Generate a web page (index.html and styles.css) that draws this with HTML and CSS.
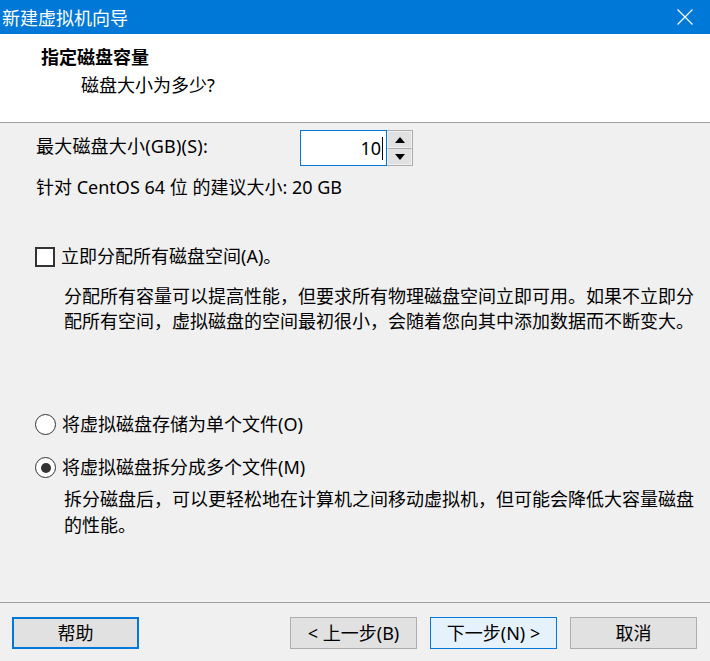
FILE: index.html
```html
<!DOCTYPE html>
<html lang="zh-CN">
<head>
<meta charset="utf-8">
<title>新建虚拟机向导</title>
<link rel="stylesheet" href="styles.css">
</head>
<body>
<div class="window">
  <div class="titlebar">
    <span class="title">新建虚拟机向导</span>
    <svg class="close" width="16" height="16" viewBox="0 0 16 16"><path d="M0.5 0.5 L15.5 15.5 M15.5 0.5 L0.5 15.5" stroke="#fff" stroke-width="1.2" fill="none"/></svg>
  </div>
  <div class="header">
    <div class="h-title">指定磁盘容量</div>
    <div class="h-sub">磁盘大小为多少?</div>
  </div>
  <div class="content">
    <div class="size-row">
      <span class="size-label">最大磁盘大小(GB)(S):</span>
      <div class="spinner">
        <div class="spin-input"><span class="spin-value">10</span><span class="caret"></span></div>
        <div class="spin-btns">
          <div class="spin-btn"><svg width="10" height="6" viewBox="0 0 10 6"><path d="M0 6 L5 0 L10 6 Z" fill="#000"/></svg></div>
          <div class="spin-btn"><svg width="10" height="6" viewBox="0 0 10 6"><path d="M0 0 L5 6 L10 0 Z" fill="#000"/></svg></div>
        </div>
      </div>
    </div>
    <div class="recommend">针对 CentOS 64 位 的建议大小: 20 GB</div>
    <div class="check-row">
      <span class="checkbox"></span>
      <span class="opt-label">立即分配所有磁盘空间(A)。</span>
    </div>
    <div class="desc desc-alloc">分配所有容量可以提高性能，但要求所有物理磁盘空间立即可用。如果不立即分配所有空间，虚拟磁盘的空间最初很小，会随着您向其中添加数据而不断变大。</div>
    <div class="radio-row radio-first">
      <span class="radio"></span>
      <span class="opt-label">将虚拟磁盘存储为单个文件(O)</span>
    </div>
    <div class="radio-row radio-second">
      <span class="radio checked"><span class="dot"></span></span>
      <span class="opt-label">将虚拟磁盘拆分成多个文件(M)</span>
    </div>
    <div class="desc desc-split">拆分磁盘后，可以更轻松地在计算机之间移动虚拟机，但可能会降低大容量磁盘的性能。</div>
  </div>
  <div class="footer">
    <button class="btn btn-help">帮助</button>
    <div class="spacer"></div>
    <button class="btn">&lt; 上一步(B)</button>
    <button class="btn btn-next">下一步(N) &gt;</button>
    <button class="btn">取消</button>
  </div>
</div>
</body>
</html>
```

FILE: styles.css
```css
html, body {
  margin: 0;
  padding: 0;
  width: 710px;
  height: 661px;
  overflow: hidden;
}
body {
  font-family: "Noto Sans", "Noto Sans CJK SC", sans-serif;
  font-size: 18px;
  color: #000;
  background: #f0f0f0;
}
.window {
  display: flex;
  flex-direction: column;
  width: 710px;
  height: 661px;
}
.titlebar {
  height: 34px;
  background: #0078d7;
  color: #fff;
  display: flex;
  align-items: center;
  justify-content: space-between;
  padding: 0 17px 0 2px;
  box-sizing: border-box;
  flex: none;
}
.title {
  font-size: 18px;
  line-height: 34px;
  font-family: "Noto Sans CJK SC", sans-serif;
}
.close {
  display: block;
}
.header {
  background: #fff;
  height: 88px;
  border-bottom: 1px solid #a0a0a0;
  flex: none;
  display: flex;
  flex-direction: column;
}
.h-title {
  margin: 11px 0 0 41px;
  font-size: 18px;
  line-height: 24px;
  font-weight: bold;
}
.h-sub {
  margin: 4px 0 0 81px;
  font-size: 18px;
  line-height: 24px;
}
.content {
  flex: 1;
  display: flex;
  flex-direction: column;
  padding-left: 36px;
}
.size-row {
  display: flex;
  align-items: center;
  margin-top: 7px;
  height: 36px;
}
.size-label {
  width: 264px;
  line-height: 25px;
  margin-top: -3px;
  letter-spacing: 0.2px;
}
.spinner {
  display: flex;
  height: 36px;
}
.spin-input {
  width: 87px;
  height: 36px;
  box-sizing: border-box;
  border: 1px solid #0078d7;
  background: #fff;
  display: flex;
  align-items: center;
  justify-content: flex-end;
  padding-right: 3px;
}
.spin-value {
  line-height: 24px;
}
.caret {
  width: 1px;
  height: 23px;
  background: #000;
  margin-left: 1px;
}
.spin-btns {
  display: flex;
  flex-direction: column;
  width: 26px;
  height: 36px;
  box-sizing: border-box;
  border: 1px solid #adadad;
  border-left: none;
}
.spin-btn {
  flex: 1;
  background: #e1e1e1;
  border: 1px solid #f0f0f0;
  display: flex;
  align-items: center;
  justify-content: center;
}
.spin-btn + .spin-btn {
  border-top: 1px solid #adadad;
}
.recommend {
  margin-top: 9px;
  line-height: 25px;
}
.check-row, .radio-row {
  display: flex;
  align-items: center;
  height: 25px;
}
.check-row {
  margin-top: 44px;
}
.checkbox {
  width: 20px;
  height: 20px;
  box-sizing: border-box;
  border: 2px solid #333;
  background: #fff;
  margin-left: -1px;
}
.opt-label {
  margin-left: 6px;
  line-height: 25px;
}
.desc {
  margin-left: 28px;
  width: 636px;
  line-height: 25px;
}
.desc-alloc {
  margin-top: 15px;
}
.radio-first {
  margin-top: 78px;
}
.radio-second {
  margin-top: 18px;
}
.radio {
  width: 21px;
  height: 21px;
  box-sizing: border-box;
  border: 1.5px solid #333;
  border-radius: 50%;
  background: #fff;
  display: flex;
  align-items: center;
  justify-content: center;
  margin-left: -1px;
}
.dot {
  width: 10px;
  height: 10px;
  border-radius: 50%;
  background: #333;
}
.desc-split {
  margin-top: 6px;
  line-height: 26px;
}
.footer {
  flex: none;
  border-top: 1px solid #a0a0a0;
  display: flex;
  align-items: flex-start;
  padding: 14px 13px 12px 12px;
  gap: 13px;
}
.spacer {
  flex: 1;
}
.btn {
  width: 127px;
  height: 32px;
  box-sizing: border-box;
  border: 1px solid #adadad;
  background: #e1e1e1;
  font-family: "Noto Sans", "Noto Sans CJK SC", sans-serif;
  font-size: 18px;
  color: #000;
  padding: 0;
  line-height: 28px;
}
.btn-help {
  border: 2px solid #0078d7;
}
.btn-next {
  border-color: #0078d7;
  background: #e5f1fb;
}
```
